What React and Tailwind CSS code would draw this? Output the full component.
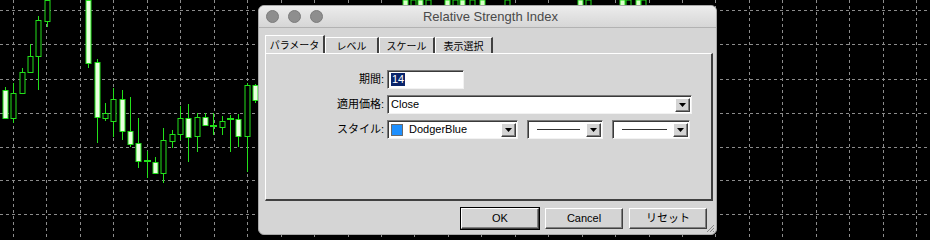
const CANDLES = [
  [5, 87, 90, 118, 119, true],
  [13, 83, 93, 118, 123, false],
  [22, 68, 72, 93, 94, false],
  [30, 44, 56, 72, 73, false],
  [38, 16, 20, 56, 90, false],
  [47, 0, 0, 21, 27, false],
  [88, 0, 0, 63, 68, true],
  [97, 59, 62, 117, 143, true],
  [105, 103, 113, 118, 121, false],
  [113, 88, 99, 121, 137, false],
  [122, 90, 99, 131, 140, true],
  [130, 97, 131, 144, 147, true],
  [138, 118, 143, 161, 168, true],
  [147, 151, 160, 162, 178, true],
  [155, 157, 162, 173, 174, true],
  [163, 128, 140, 173, 183, false],
  [172, 130, 134, 141, 148, false],
  [180, 106, 118, 134, 140, false],
  [188, 104, 118, 137, 162, true],
  [197, 113, 117, 136, 152, false],
  [205, 113, 117, 125, 126, true],
  [213, 113, 125, 127, 135, true],
  [222, 116, 121, 127, 135, false],
  [230, 115, 118, 120, 152, true],
  [238, 114, 119, 136, 147, true],
  [247, 83, 85, 136, 172, false],
  [255, 84, 85, 100, 103, true],
]

// bits of candles poking out above the dialog
const TOP_BITS = [
  [405, true], [413, false], [420, true], [428, false], [447, true], [455, false],
  [462, true], [472, false], [482, true], [507, false], [580, true], [588, false],
  [622, true], [628, false], [638, true], [643, false],
]

const H_LINES = [10, 44, 79, 113, 147, 180, 214]
const V_LINES = Array.from({ length: 28 }, (_, i) => 13 + i * 33.45)

function Chart() {
  return (
    <svg className="absolute inset-0" width="930" height="240" viewBox="0 0 930 240">
      <rect width="930" height="240" fill="#000" />
      {H_LINES.map(y => (
        <line key={'h' + y} x1="0" x2="930" y1={y + 0.5} y2={y + 0.5} stroke="#8c8c8c" strokeDasharray="3 3" />
      ))}
      {V_LINES.map(x => (
        <line key={'v' + x} y1="0" y2="240" x1={Math.round(x) + 0.5} x2={Math.round(x) + 0.5} stroke="#8c8c8c" strokeDasharray="3 3" />
      ))}
      {CANDLES.map(([x, wt, bt, bb, wb, filled], i) => (
        <g key={i}>
          <line x1={x + 0.5} x2={x + 0.5} y1={wt} y2={wb} stroke="#22e01a" />
          {bb - bt <= 2 ? (
            <line x1={x - 3} x2={x + 4} y1={bt + 1} y2={bt + 1} stroke="#22e01a" strokeWidth="2" />
          ) : (
            <rect x={x - 2} y={bt + 0.5} width="5" height={bb - bt} fill={filled ? '#eaffe0' : '#000'} stroke="#22e01a" />
          )}
        </g>
      ))}
      {TOP_BITS.map(([x, filled], i) => (
        <rect key={'t' + i} x={x - 2} y="0" width="5" height="6" fill={filled ? '#d8ffc8' : '#000'} stroke="#22e01a" />
      ))}
    </svg>
  )
}

function Arrow() {
  return (
    <span className="flex items-center justify-center w-[15px] h-[14px] bg-[#d4d4d4] border border-t-white border-l-white border-b-[#404040] border-r-[#404040] shadow-[inset_-1px_-1px_0_#808080]">
      <svg width="7" height="4" viewBox="0 0 7 4"><path d="M0 0h7L3.5 4z" fill="#000" /></svg>
    </span>
  )
}

function Field({ w, children, arrow }) {
  return (
    <div className={`${w} h-[19px] flex items-center bg-white border border-t-[#7a7a7a] border-l-[#7a7a7a] border-b-[#f2f2f2] border-r-[#f2f2f2] shadow-[inset_1px_1px_0_#3a3a3a]`}>
      <div className="flex-1 flex items-center min-w-0 h-full pl-[3px]">{children}</div>
      {arrow && <div className="pr-[1px]"><Arrow /></div>}
    </div>
  )
}

function Row({ label, children }) {
  return (
    <div className="flex items-center">
      <div className="w-[121px] pr-[3px] text-right text-[11px] text-black leading-none">{label}</div>
      <div className="flex items-center">{children}</div>
    </div>
  )
}

function LineSample() {
  return <div className="flex-1 h-[1px] bg-[#333] ml-[6px] mr-[6px]" />
}

function Btn({ label, primary }) {
  return (
    <button className={`w-[78px] h-[21px] flex items-center justify-center text-[11px] text-black bg-[#d4d4d4] border border-t-white border-l-white border-b-[#404040] border-r-[#404040] ${primary ? 'outline outline-1 outline-black shadow-[inset_-1px_-1px_0_#808080]' : 'shadow-[inset_-1px_-1px_0_#808080]'}`}>
      {label}
    </button>
  )
}

const TABS = [['パラメータ', 'w-[60px]'], ['レベル', 'w-[54px]'], ['スケール', 'w-[56px]'], ['表示選択', 'w-[58px]']]

export default function App() {
  return (
    <div className="relative w-[930px] h-[240px] overflow-hidden bg-black" style={{ fontFamily: '"Liberation Sans", "Noto Sans CJK JP", sans-serif' }}>
      <Chart />

      <div className="absolute left-[258px] top-[5px] w-[459px] h-[230px] rounded-[6px] overflow-hidden bg-[#d5d5d5] border border-[#a8a8a8] flex flex-col">
        <div className="relative h-[22px] shrink-0 flex items-center bg-gradient-to-b from-[#ececec] to-[#d6d6d6] border-b border-[#b2b2b2]">
          <div className="flex gap-[9px] pl-[7px]">
            <span className="w-[13px] h-[13px] rounded-full bg-[#8e8e8e] border border-[#7c7c7c]" />
            <span className="w-[13px] h-[13px] rounded-full bg-[#8e8e8e] border border-[#7c7c7c]" />
            <span className="w-[13px] h-[13px] rounded-full bg-[#8e8e8e] border border-[#7c7c7c]" />
          </div>
          <div className="absolute inset-0 flex items-center justify-center pl-[6px] text-[13px] text-[#4a4a4a]">Relative Strength Index</div>
        </div>

        <div className="flex-1 flex flex-col px-[6px] pt-[7px]">
          <div className="flex items-end h-[18px]">
            {TABS.map(([t, w], i) => (
              <div key={t} className={`${w} ${i === 0 ? 'h-[18px] bg-[#dadada]' : 'h-[16px]'} flex items-center justify-center text-[10px] text-black border-t border-l border-white border-r-2 border-r-[#404040] leading-none`} style={{ fontFamily: '"Noto Sans CJK JP", sans-serif' }}>
                {t}
              </div>
            ))}
          </div>

          <div className="h-[148px] w-[448px] bg-[#d6d6d6] border-t border-l border-white border-b-2 border-r-2 border-b-[#404040] border-r-[#404040] flex flex-col gap-[6px] pt-[16px]">
            <Row label="期間:">
              <Field w="w-[77px]">
                <span className="bg-[#0a246a] text-white text-[11px] leading-[13px] px-[1px]">14</span>
              </Field>
            </Row>
            <Row label="適用価格:">
              <Field w="w-[305px]" arrow>
                <span className="text-[11px] text-black">Close</span>
              </Field>
            </Row>
            <Row label="スタイル:">
              <div className="flex items-center gap-[9px]">
                <Field w="w-[131px]" arrow>
                  <span className="w-[12px] h-[12px] bg-[#1e90ff] border border-[#6a6a6a] mr-[6px]" />
                  <span className="text-[11px] text-black">DodgerBlue</span>
                </Field>
                <Field w="w-[76px]" arrow><LineSample /></Field>
                <Field w="w-[78px]" arrow><LineSample /></Field>
              </div>
            </Row>
          </div>

          <div className="flex justify-end gap-[6px] pr-[3px] pt-[7px]">
            <Btn label="OK" primary />
            <Btn label="Cancel" />
            <Btn label="リセット" />
          </div>
        </div>

        <svg className="absolute right-[1px] bottom-[1px]" width="10" height="10" viewBox="0 0 10 10">
          <path d="M9 2L2 9M9 5L5 9M9 8L8 9" stroke="#8a8a8a" strokeWidth="1" />
        </svg>
      </div>
    </div>
  )
}
